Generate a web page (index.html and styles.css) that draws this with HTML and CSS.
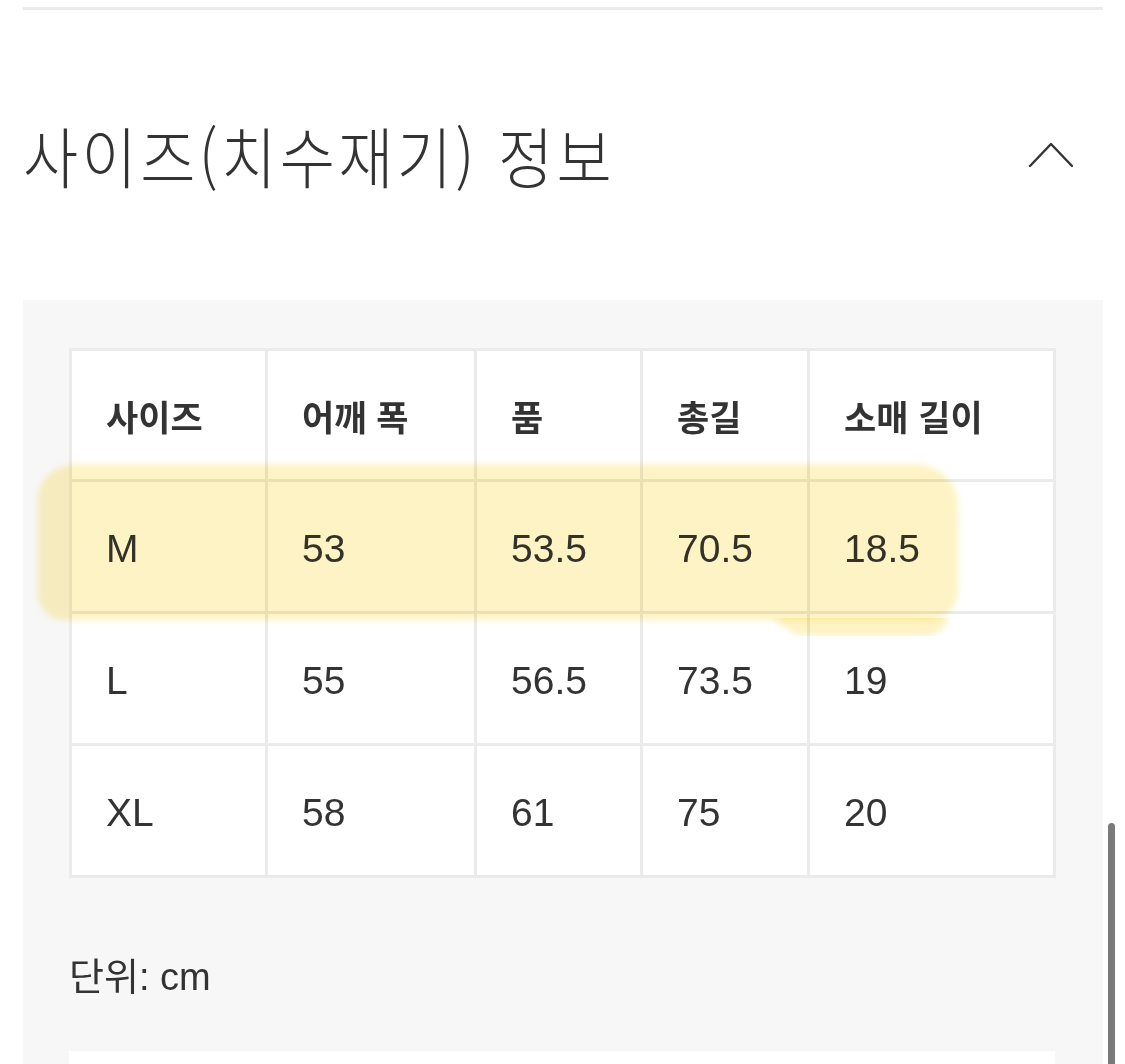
FILE: index.html
```html
<!DOCTYPE html>
<html lang="ko">
<head>
<meta charset="utf-8">
<title>사이즈 정보</title>
<link rel="stylesheet" href="styles.css">
</head>
<body>
<div class="page">
  <div class="divider"></div>
  <div class="section-header">
    <h2 class="section-title">사이즈(치수재기) 정보</h2>
    <svg class="chevron" width="48" height="30" viewBox="0 0 48 30" aria-hidden="true">
      <polyline points="3,27 24,5 45,27" fill="none" stroke="#333" stroke-width="2.4" stroke-linecap="round" stroke-linejoin="round"/>
    </svg>
  </div>
  <div class="panel">
    <div class="table-wrap">
      <table class="size-table">
        <colgroup>
          <col class="c1"><col class="c2"><col class="c3"><col class="c4"><col class="c5">
        </colgroup>
        <thead>
          <tr><th>사이즈</th><th>어깨 폭</th><th>품</th><th>총길</th><th>소매 길이</th></tr>
        </thead>
        <tbody>
          <tr><td>M</td><td>53</td><td>53.5</td><td>70.5</td><td>18.5</td></tr>
          <tr><td>L</td><td>55</td><td>56.5</td><td>73.5</td><td>19</td></tr>
          <tr><td>XL</td><td>58</td><td>61</td><td>75</td><td>20</td></tr>
        </tbody>
      </table>
      <div class="highlight"></div>
      <div class="highlight-tail"></div>
    </div>
    <p class="unit">단위: cm</p>
    <div class="next-box"></div>
  </div>
  <div class="scrollbar"></div>
</div>
</body>
</html>
```

FILE: styles.css
```css
html, body {
  margin: 0;
  padding: 0;
  background: #ffffff;
}

body {
  font-family: "Liberation Sans", "Noto Sans CJK KR", sans-serif;
  color: #333333;
  overflow: hidden;
}

.page {
  position: relative;
  width: 1125px;
  height: 1064px;
  overflow: hidden;
}

.divider {
  margin: 7px 22px 0 23px;
  height: 3px;
  background: #ebebeb;
}

.section-header {
  display: flex;
  align-items: center;
  justify-content: space-between;
  height: 290px;
  margin: 0 50px 0 23px;
  padding-bottom: 4px;
  box-sizing: border-box;
}

.section-title {
  margin: 0;
  font-family: "Noto Sans CJK KR", sans-serif;
  font-weight: 300;
  font-size: 60px;
  letter-spacing: 3.4px;
  color: #333333;
  transform: scaleY(1.1);
  transform-origin: left center;
}

.chevron {
  display: block;
  margin-top: 2px;
}

.panel {
  margin-left: 23px;
  width: 1080px;
  background: #f7f7f7;
  padding: 48px 48px 0 46px;
  box-sizing: border-box;
  height: 800px;
}

.table-wrap {
  position: relative;
}

.size-table {
  border-collapse: collapse;
  width: 986px;
  background: #ffffff;
  table-layout: fixed;
}

.c1 { width: 196px; }
.c2 { width: 209px; }
.c3 { width: 166px; }
.c4 { width: 167px; }
.c5 { width: 246px; }

.size-table th,
.size-table td {
  border: 3px solid #ebebeb;
  height: 128px;
  padding: 0 0 0 34px;
  text-align: left;
  vertical-align: middle;
  color: #333333;
}

.size-table th {
  font-family: "Noto Sans CJK KR", sans-serif;
  font-weight: 700;
  font-size: 35px;
}

.size-table td {
  font-family: "Liberation Sans", "Noto Sans CJK KR", sans-serif;
  font-size: 39px;
  height: 125px;
  padding-top: 4px;
}

.highlight {
  position: absolute;
  left: -31px;
  top: 116px;
  width: 920px;
  height: 156px;
  background: rgba(253, 226, 115, 0.42);
  border-radius: 40px 44px 30px 26px / 34px 40px 30px 26px;
  filter: blur(3px);
  mix-blend-mode: multiply;
  pointer-events: none;
}

.highlight-tail {
  position: absolute;
  left: 700px;
  top: 248px;
  width: 180px;
  height: 40px;
  background: rgba(253, 226, 115, 0.42);
  border-radius: 0 0 24px 40px;
  filter: blur(3px);
  mix-blend-mode: multiply;
  pointer-events: none;
  clip-path: inset(22px 0 0 0);
}

.unit {
  margin: 75px 0 0 0;
  font-family: "Liberation Sans", "Noto Sans CJK KR", sans-serif;
  font-size: 38px;
  color: #333333;
  line-height: 48px;
}

.next-box {
  margin-top: 50px;
  width: 986px;
  height: 60px;
  background: #ffffff;
}

.scrollbar {
  position: absolute;
  left: 1108px;
  top: 823px;
  width: 7px;
  height: 260px;
  border-radius: 4px;
  background: #7a7a7a;
}
```
